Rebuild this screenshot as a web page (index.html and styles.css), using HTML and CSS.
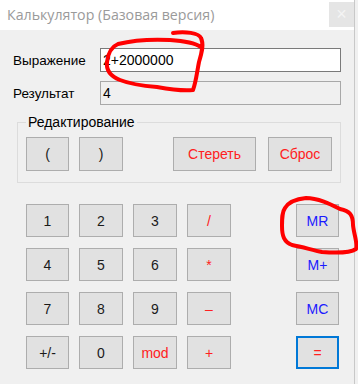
FILE: index.html
```html
<!DOCTYPE html>
<html lang="ru">
<head>
    <meta charset="UTF-8">
    <meta name="viewport" content="width=device-width, initial-scale=1.0">
    <title>Калькулятор (Базовая версия)</title>
    <link rel="stylesheet" href="styles.css">
</head>
<body>
    <div class="window">
        <div class="titlebar">
            <span class="title">Калькулятор (Базовая версия)</span>
            <button class="close">×</button>
        </div>
        <div class="content">
            <div class="field-row">
                <label>Выражение</label>
                <div class="input">2+2000000</div>
            </div>
            <div class="field-row">
                <label>Результат</label>
                <div class="input readonly">4</div>
            </div>

            <fieldset class="group">
                <legend>Редактирование</legend>
                <div class="edit-row">
                    <button class="btn">(</button>
                    <button class="btn wide">)</button>
                    <button class="btn red erase">Стереть</button>
                    <button class="btn red reset">Сброс</button>
                </div>
            </fieldset>

            <div class="keypad">
                <button class="btn">1</button>
                <button class="btn">2</button>
                <button class="btn">3</button>
                <button class="btn red">/</button>
                <span></span>
                <button class="btn blue">MR</button>

                <button class="btn">4</button>
                <button class="btn">5</button>
                <button class="btn">6</button>
                <button class="btn red">*</button>
                <span></span>
                <button class="btn blue">M+</button>

                <button class="btn">7</button>
                <button class="btn">8</button>
                <button class="btn">9</button>
                <button class="btn red">–</button>
                <span></span>
                <button class="btn blue">MC</button>

                <button class="btn">+/-</button>
                <button class="btn">0</button>
                <button class="btn red">mod</button>
                <button class="btn red">+</button>
                <span></span>
                <button class="btn red default">=</button>
            </div>
        </div>
    </div>

    <!-- red marker scribbles drawn over the screenshot -->
    <svg class="marks" width="358" height="384" viewBox="0 0 358 384">
        <path d="M173 33 C185 31 199 33 201 38 C204 44 202 52 199 62 C197 72 196 82 193 90 C185 91 168 89 157 87 C145 86 130 84 120 80 C110 76 106 70 107 62 C108 53 111 47 118 44 C130 41 150 39 170 40 C185 41 195 43 201 47"
              fill="none" stroke="#ff0000" stroke-width="4" stroke-linecap="round" stroke-linejoin="round"/>
        <path d="M285 208 C288 203 296 199 306 198 C318 198 330 204 340 209 C350 211 353 215 353 225 C354 235 358 244 356 249 C350 253 335 253 322 252 C312 250 303 247 292 245 C284 242 282 236 282 226 C282 218 282 212 285 208"
              fill="none" stroke="#ff0000" stroke-width="4" stroke-linecap="round" stroke-linejoin="round"/>
    </svg>
</body>
</html>
```

FILE: styles.css
```css
body {
    margin: 0;
    width: 358px;
    height: 384px;
    background-color: #f0f0f0;
    font-family: "Liberation Sans", Arial, sans-serif;
    font-size: 13px;
    color: #000;
    overflow: hidden;
    position: relative;
}
.window {
    width: 354px;
    height: 384px;
    border-right: 1px solid #c8c8c8;
    background-color: #f0f0f0;
}
.titlebar {
    height: 30px;
    background-color: #fff;
    display: flex;
    align-items: center;
    justify-content: space-between;
}
.title {
    margin-left: 7px;
    margin-top: -2px;
    font-family: "Open Sans", "Noto Sans", sans-serif;
    font-size: 14.2px;
    color: #9a9a9a;
}
.close {
    width: 25px;
    height: 25px;
    margin-top: -1px;
    border: none;
    padding: 0;
    background-color: #e5e5e5;
    color: #f4f4f4;
    font-size: 18px;
    line-height: 25px;
}
.content {
    padding: 18px 0 0 0;
}
.field-row {
    display: flex;
    align-items: center;
    height: 24px;
    margin-bottom: 9px;
}
.field-row label {
    width: 87px;
    padding-left: 13px;
    font-size: 13.5px;
}
.input {
    width: 237px;
    height: 22px;
    border: 1px solid #7a7a7a;
    background-color: #fff;
    padding-left: 2px;
    font-size: 14px;
    line-height: 22px;
}
.input.readonly {
    background-color: #f0f0f0;
    border-color: #a8a8a8;
}
.group {
    margin: 1px 0 0 17px;
    width: 324px;
    padding: 7px 0 11px 8px;
    border: 1px solid #dcdcdc;
    box-sizing: border-box;
}
.group legend {
    margin-left: 0;
    padding: 0 2px;
    font-size: 14px;
    line-height: 16px;
}
.edit-row {
    display: flex;
}
.btn {
    height: 34px;
    width: 43px;
    padding: 0;
    border: 1px solid #adadad;
    background-color: #e1e1e1;
    font-family: "Liberation Sans", Arial, sans-serif;
    font-size: 14px;
    color: #1a1a1a;
}
.edit-row .wide {
    width: 44px;
    margin-left: 10px;
}
.edit-row .erase {
    width: 83px;
    margin-left: 50px;
}
.edit-row .reset {
    width: 64px;
    margin-left: 12px;
}
.red {
    color: #ff2020;
}
.blue {
    color: #1a1aff;
}
.keypad {
    display: grid;
    grid-template-columns: 43px 44px 44px 44px 45px 43px;
    grid-auto-rows: 33px;
    column-gap: 10px;
    row-gap: 11px;
    margin: 21px 0 0 26px;
}
.keypad .btn {
    width: 100%;
    height: 33px;
}
.keypad .default {
    border: 2px solid #0078d7;
}
.marks {
    position: absolute;
    left: 0;
    top: 0;
    pointer-events: none;
}
```
